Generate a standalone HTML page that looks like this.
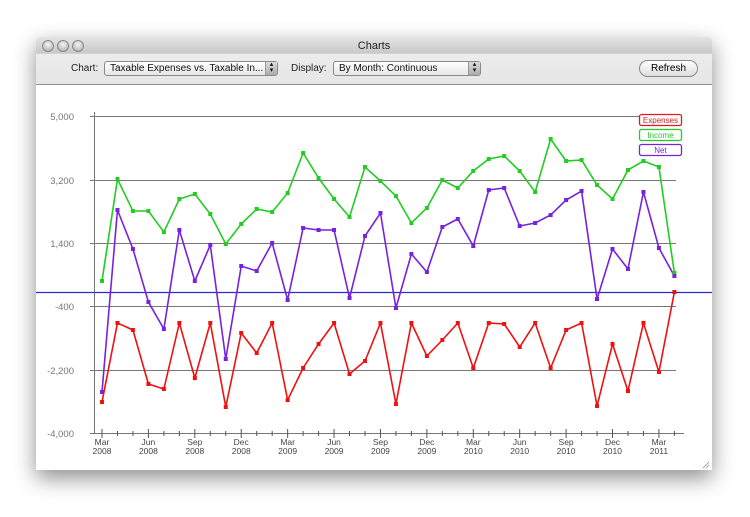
<!DOCTYPE html><html><head><style>
body{margin:0;width:750px;height:517px;background:#fff;position:relative;overflow:hidden;font-family:"Liberation Sans",sans-serif}
.win{position:absolute;left:36px;top:37px;width:676px;height:433px;background:#fff;box-shadow:0 8px 22px rgba(0,0,0,.45);border-radius:4px 4px 0 0;overflow:hidden}
.tb{position:absolute;left:0;top:0;width:676px;height:47px;background:linear-gradient(#e4e4e4,#c9c9c9 16px,#b8b8b8 16px,#ececec 17px,#e6e6e6);border-bottom:1px solid #8e8e8e}
.tl{position:absolute;top:3px;width:10px;height:10px;border-radius:50%;background:radial-gradient(circle at 50% 35%,#f4f4f4,#a8a8a8);border:1px solid #888}
.title{position:absolute;top:3px;left:0;width:676px;text-align:center;font-size:11px;color:#222}
.lab{position:absolute;top:26px;font-size:10px;color:#222}
.pop{position:absolute;top:24px;height:13px;border:1px solid #8a8a8a;border-radius:3px;background:linear-gradient(#fff,#e6e6e6);font-size:10px;line-height:13px;padding-left:5px;box-sizing:content-box;color:#111}
.pop i{position:absolute;right:0;top:0;width:11px;height:13px;background:linear-gradient(#ddd,#aaa);border-left:1px solid #999;font-style:normal;font-size:7px;text-align:center;line-height:6px}
.btn{position:absolute;left:603px;top:23px;width:57px;height:15px;border:1px solid #888;border-radius:9px;background:linear-gradient(#fff,#ddd);font-size:10px;text-align:center;line-height:15px}
</style></head><body>
<div class="win">
<div class="tb">
<div class="tl" style="left:6px"></div><div class="tl" style="left:21px"></div><div class="tl" style="left:36px"></div>
<div class="title">Charts</div>
<div class="lab" style="left:35px">Chart:</div>
<div class="pop" style="left:68px;width:167px">Taxable Expenses vs. Taxable In...<i>▴<br>▾</i></div>
<div class="lab" style="left:255px">Display:</div>
<div class="pop" style="left:297px;width:141px">By Month: Continuous<i>▴<br>▾</i></div>
<div class="btn">Refresh</div>
</div>
</div>
<svg width="750" height="517" style="position:absolute;left:0;top:0" font-family="Liberation Sans" font-size="9.5">
<g stroke="#777" stroke-width="1">
<line x1="90" y1="116.5" x2="676" y2="116.5"/><line x1="90" y1="180.5" x2="676" y2="180.5"/><line x1="90" y1="243.5" x2="676" y2="243.5"/><line x1="90" y1="306.5" x2="676" y2="306.5"/><line x1="90" y1="370.5" x2="676" y2="370.5"/>
<line x1="94.5" y1="112" x2="94.5" y2="434"/><line x1="90" y1="433.5" x2="684" y2="433.5"/>
</g>
<line x1="36" y1="292.5" x2="712" y2="292.5" stroke="#2b2bd0" stroke-width="1.2"/>
<g fill="#777" text-anchor="end"><text x="74" y="120">5,000</text><text x="74" y="184">3,200</text><text x="74" y="247">1,400</text><text x="74" y="310">-400</text><text x="74" y="374">-2,200</text><text x="74" y="437">-4,000</text></g>
<g id="ticks" stroke="#555"></g>
<g fill="#444" text-anchor="middle" font-size="8.5" id="xl"></g>
<polyline id="inc" fill="none" stroke="#22cc22" stroke-width="1.6"/>
<polyline id="net" fill="none" stroke="#7722dd" stroke-width="1.6"/>
<polyline id="exp" fill="none" stroke="#ee1111" stroke-width="1.6"/>
<g id="pts"></g>
<rect x="639.5" y="114.5" width="42" height="11" rx="2" fill="#fff" stroke="#e21a1a" stroke-width="1.3"/><text x="660.5" y="123" fill="#e21a1a" font-size="8" text-anchor="middle">Expenses</text>
<rect x="639.5" y="129.5" width="42" height="11" rx="2" fill="#fff" stroke="#22cc22" stroke-width="1.3"/><text x="660.5" y="138" fill="#22cc22" font-size="8" text-anchor="middle">Income</text>
<rect x="639.5" y="144.5" width="42" height="11" rx="2" fill="#fff" stroke="#7722dd" stroke-width="1.3"/><text x="660.5" y="153" fill="#7722dd" font-size="8" text-anchor="middle">Net</text>
<g stroke="#aaa"><line x1="703" y1="468" x2="709" y2="462"/><line x1="706" y1="468" x2="709" y2="465"/></g>
</svg>
<script>
var inc=[281,179,211,211,232,199,194,214,244,224,209,212,193,153,178,199,217,167,181,196,223,208,180,188,171,159,156,171,192,139,161,160,185,199,170,161,167,273];
var net=[392,210,249,302,329,230,281,245,359,266,271,243,300,228,230,230,298,236,213,308,254,272,227,219,246,190,188,226,223,215,200,191,299,249,269,192,248,276];
var exp=[402,323,330,384,389,323,378,323,407,333,353,323,400,368,344,323,374,361,323,404,323,356,340,323,368,323,324,347,323,368,330,323,406,344,391,323,372,292];
function X(i){return 102+15.47*i}
var ns="http://www.w3.org/2000/svg";
function pl(id,d,c){var s="";var g=document.getElementById("pts");d.forEach(function(y,i){s+=X(i)+","+y+" ";var r=document.createElementNS(ns,"rect");r.setAttribute("x",X(i)-2);r.setAttribute("y",y-2);r.setAttribute("width",4);r.setAttribute("height",4);r.setAttribute("fill",c);g.appendChild(r)});document.getElementById(id).setAttribute("points",s)}
pl("inc",inc,"#22cc22");pl("net",net,"#7722dd");pl("exp",exp,"#ee1111");
var t=document.getElementById("ticks"),xl=document.getElementById("xl");
var m=["Mar","Jun","Sep","Dec"];
for(var i=0;i<38;i++){var l=document.createElementNS(ns,"line");var big=i%3==0;l.setAttribute("x1",X(i));l.setAttribute("x2",X(i));l.setAttribute("y1",big?429:431);l.setAttribute("y2",big?438:436);t.appendChild(l);
if(big&&i<=36){var k=i/3;var yr=2008+Math.floor((i+2)/12);
var a=document.createElementNS(ns,"text");a.setAttribute("x",X(i));a.setAttribute("y",445);a.textContent=m[k%4];xl.appendChild(a);
var b=document.createElementNS(ns,"text");b.setAttribute("x",X(i));b.setAttribute("y",454);b.textContent=yr;xl.appendChild(b);}}
</script>
</body></html>
